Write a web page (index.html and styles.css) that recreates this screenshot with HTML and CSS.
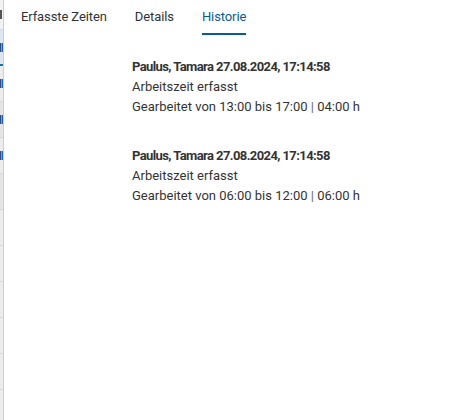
FILE: index.html
```html
<!DOCTYPE html>
<html lang="de">
<head>
  <meta charset="UTF-8">
  <meta name="viewport" content="width=device-width, initial-scale=1.0">
  <title>Historie</title>
  <link rel="stylesheet" href="styles.css">
</head>
<body>
  <div class="layout">
    <!-- Underlying table, mostly covered by the side panel -->
    <div class="behind">
      <div class="behind-row head"><span class="glyph dark"></span></div>
      <div class="behind-row selected"><span class="glyph"></span></div>
      <div class="behind-row"><span class="glyph"></span></div>
      <div class="behind-row alt"><span class="glyph"></span></div>
      <div class="behind-row"><span class="glyph"></span></div>
      <div class="behind-row alt"></div>
      <div class="behind-row"></div>
      <div class="behind-row"></div>
      <div class="behind-row"></div>
      <div class="behind-row"></div>
      <div class="behind-row"></div>
    </div>

    <!-- Side panel -->
    <div class="panel">
      <nav class="tabs">
        <a class="tab">Erfasste Zeiten</a>
        <a class="tab">Details</a>
        <a class="tab active">Historie</a>
      </nav>

      <div class="history">
        <div class="entry">
          <div class="entry-title">Paulus, Tamara 27.08.2024, 17:14:58</div>
          <div>Arbeitszeit erfasst</div>
          <div>Gearbeitet von 13:00 bis 17:00 <span class="sep">|</span> 04:00 h</div>
        </div>
        <div class="entry">
          <div class="entry-title">Paulus, Tamara 27.08.2024, 17:14:58</div>
          <div>Arbeitszeit erfasst</div>
          <div>Gearbeitet von 06:00 bis 12:00 <span class="sep">|</span> 06:00 h</div>
        </div>
      </div>
    </div>
  </div>
</body>
</html>
```

FILE: styles.css
```css
* {
  margin: 0;
  padding: 0;
  box-sizing: border-box;
}

body {
  font-family: Roboto, sans-serif;
  font-size: 13px;
  color: #333;
  background-color: #fff;
}

.layout {
  display: flex;
  height: 420px;
  overflow: hidden;
}

/* Underlying table strip */
.behind {
  width: 4px;
  flex-shrink: 0;
  background-color: #ececec;
  border-right: 1px solid #cfcfcf;
  overflow: hidden;
}

.behind-row {
  height: 36px;
  border-bottom: 1px solid #d8d8d8;
  display: flex;
  align-items: center;
}

.behind-row.head {
  height: 30px;
  background-color: #f2f2f2;
}

.behind-row.selected {
  background-color: #dde6f0;
  border-bottom: 2px solid #1f6fb8;
}

.behind-row.alt {
  background-color: #e4e4e4;
}

/* sliver of the cut-off cell text */
.glyph {
  width: 3px;
  height: 9px;
  background: linear-gradient(90deg, #2a4f8a 0 1px, #d08a30 1px 2px, #1e64b4 2px 3px);
}

.glyph.dark {
  width: 2px;
  background: #555;
}

/* Panel */
.panel {
  flex: 1;
  background-color: #fff;
}

.tabs {
  display: flex;
  padding-left: 3px;
}

.tab {
  margin: 0 14px;
  padding: 8px 0 8px;
  border-bottom: 2px solid transparent;
  color: #333;
  font-size: 13px;
  line-height: 17px;
  letter-spacing: -0.1px;
}

.tab.active {
  color: #0a5a96;
  border-bottom-color: #0a5a96;
}

.history {
  padding: 22px 0 0 128px;
  line-height: 20px;
}

.entry {
  margin-bottom: 29px;
}

.entry-title {
  font-weight: bold;
  letter-spacing: -0.6px;
}

.sep {
  color: #666;
}
```
